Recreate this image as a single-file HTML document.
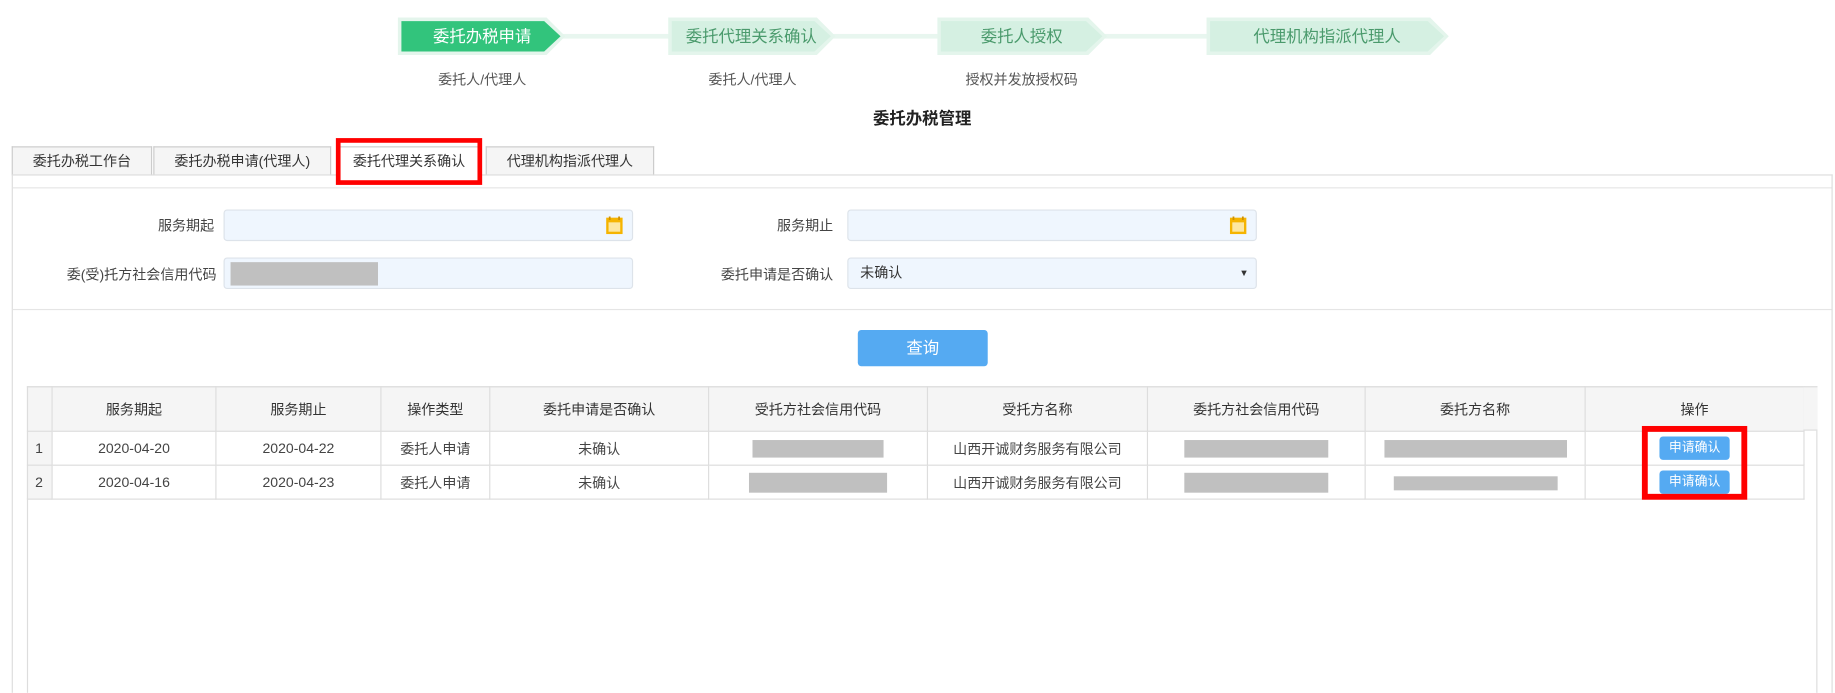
<!DOCTYPE html>
<html><head><meta charset="utf-8"><style>
*{box-sizing:border-box;margin:0;padding:0}
body{width:1835px;height:693px;overflow:hidden;background:#fff;font-family:"Liberation Sans","Noto Sans CJK SC",sans-serif;color:#333}
#w{position:absolute;left:0;top:0;width:1568px;height:592px;transform:scale(1.17028);transform-origin:0 0}
.a{position:absolute}
.lbl{font-size:12px;color:#555;text-align:center}
.tab{position:absolute;top:125px;height:25px;border:1px solid #ccc;border-bottom:none;background:#f5f5f5;font-size:12px;color:#333;text-align:center;line-height:24px}
.inp{position:absolute;height:27px;background:#eff6fe;border:1px solid #dde3ea;border-radius:3px;font-size:12px;line-height:25px;padding-left:10px}
.fl{position:absolute;font-size:12px;color:#444;text-align:right;width:180px}
table{border-collapse:collapse;font-size:12px;color:#444;table-layout:fixed}
td,th{border:1px solid #ddd;text-align:center;height:29px;font-weight:normal}
th{background:#f5f5f5;height:38px;color:#333}
.g{display:inline-block;background:#c0c0c0;height:15px;vertical-align:middle}
.btn{display:inline-block;background:#55aaf2;color:#fff;font-size:11px;width:60px;height:20px;line-height:20px;border-radius:3px}
</style></head><body><div id="w">
<svg class="a" style="left:0;top:0" width="1568" height="60">
<rect x="480" y="29" width="95" height="4" fill="#e8f6ef"/>
<rect x="712" y="29" width="92" height="4" fill="#e8f6ef"/>
<rect x="944" y="29" width="90" height="4" fill="#e8f6ef"/>
<polygon points="340,15 467,15 483,31 467,47 340,47" fill="#e4f5ec"/>
<polygon points="343,18 465,18 479,31 465,44 343,44" fill="#32c47c"/>
<polygon points="571,15 698,15 714,31 698,47 571,47" fill="#e4f5ec"/>
<polygon points="574,18 696,18 710,31 696,44 574,44" fill="#d5f0e2"/>
<polygon points="801,15 930,15 946,31 930,47 801,47" fill="#e4f5ec"/>
<polygon points="804,18 928,18 942,31 928,44 804,44" fill="#d5f0e2"/>
<polygon points="1031,15 1222,15 1238,31 1222,47 1031,47" fill="#e4f5ec"/>
<polygon points="1034,18 1220,18 1234,31 1220,44 1034,44" fill="#d5f0e2"/>
<g font-family="Liberation Sans,Noto Sans CJK SC,sans-serif" font-size="14" text-anchor="middle">
<text x="412" y="36" fill="#fff">委托办税申请</text>
<text x="642" y="36" fill="#4a9a6c">委托代理关系确认</text>
<text x="873" y="36" fill="#4a9a6c">委托人授权</text>
<text x="1134" y="36" fill="#4a9a6c">代理机构指派代理人</text>
</g></svg>
<div class="a lbl" style="left:352px;top:59px;width:120px">委托人/代理人</div>
<div class="a lbl" style="left:583px;top:59px;width:120px">委托人/代理人</div>
<div class="a lbl" style="left:803px;top:59px;width:140px">授权并发放授权码</div>
<div class="a" style="left:688px;top:91px;width:200px;text-align:center;font-size:14px;font-weight:bold;color:#222">委托办税管理</div>
<div class="tab" style="left:10px;width:120px">委托办税工作台</div>
<div class="tab" style="left:131px;width:152px">委托办税申请(代理人)</div>
<div class="tab" style="left:415px;width:144px">代理机构指派代理人</div>
<div class="a" style="left:10px;top:149px;width:1556px;height:443px;border:1px solid #ddd;border-bottom:none"></div>
<div class="a" style="left:11px;top:160px;width:1554px;border-top:1px solid #e5e5e5"></div>
<div class="tab" style="left:288px;width:123px;background:#fff;height:26px">委托代理关系确认</div>
<div class="a" style="left:287px;top:118px;width:125px;height:40px;border:4px solid #f00"></div>
<div class="fl" style="left:3px;top:184px">服务期起</div>
<div class="inp" style="left:191px;top:179px;width:350px"></div>
<div class="fl" style="left:532px;top:184px">服务期止</div>
<div class="inp" style="left:724px;top:179px;width:350px"></div>
<svg class="a" style="left:516px;top:183px" width="20" height="20"><rect x="2" y="3" width="14" height="14" fill="#f5b400"/><rect x="4" y="7" width="10" height="8" fill="#fde7a0"/><path d="M5 2v3M13 2v3" stroke="#d09000" stroke-width="1.5"/></svg>
<svg class="a" style="left:1049px;top:183px" width="20" height="20"><rect x="2" y="3" width="14" height="14" fill="#f5b400"/><rect x="4" y="7" width="10" height="8" fill="#fde7a0"/><path d="M5 2v3M13 2v3" stroke="#d09000" stroke-width="1.5"/></svg>
<div class="fl" style="left:5px;top:226px">委(受)托方社会信用代码</div>
<div class="inp" style="left:191px;top:220px;width:350px"><span class="g" style="position:absolute;left:5px;top:3px;width:126px;height:20px"></span></div>
<div class="fl" style="left:532px;top:226px">委托申请是否确认</div>
<div class="inp" style="left:724px;top:220px;width:350px">未确认<span style="position:absolute;right:6px;font-size:8px">▼</span></div>
<div class="a" style="left:11px;top:264px;width:1554px;border-top:1px solid #e5e5e5"></div>
<div class="a" style="left:733px;top:282px;width:111px;height:31px;background:#55aaf2;border-radius:3px;color:#fff;font-size:14px;text-align:center;line-height:31px">查询</div>
<div class="a" style="left:23px;top:330px;width:1530px;height:262px;border:1px solid #ddd;border-bottom:none"></div>
<table class="a" style="left:23px;top:330px;width:1518px">
<colgroup><col style="width:21px"><col style="width:140px"><col style="width:141px"><col style="width:93px"><col style="width:187px"><col style="width:187px"><col style="width:188px"><col style="width:186px"><col style="width:188px"><col style="width:187px"></colgroup>
<tr><th></th><th>服务期起</th><th>服务期止</th><th>操作类型</th><th>委托申请是否确认</th><th>受托方社会信用代码</th><th>受托方名称</th><th>委托方社会信用代码</th><th>委托方名称</th><th>操作</th></tr>
<tr><td style="background:#f5f5f5;text-align:left;padding-left:6px">1</td><td>2020-04-20</td><td>2020-04-22</td><td>委托人申请</td><td>未确认</td><td><span class="g" style="width:112px"></span></td><td>山西开诚财务服务有限公司</td><td><span class="g" style="width:123px"></span></td><td><span class="g" style="width:156px"></span></td><td><span class="btn">申请确认</span></td></tr>
<tr><td style="background:#f5f5f5;text-align:left;padding-left:6px">2</td><td>2020-04-16</td><td>2020-04-23</td><td>委托人申请</td><td>未确认</td><td><span class="g" style="width:118px;height:17px"></span></td><td>山西开诚财务服务有限公司</td><td><span class="g" style="width:123px;height:17px"></span></td><td><span class="g" style="width:140px;height:12px"></span></td><td><span class="btn">申请确认</span></td></tr>
</table>
<div class="a" style="left:1541px;top:330px;width:12px;height:38px;background:#f5f5f5;border-bottom:1px solid #ddd;border-top:1px solid #ddd"></div>
<div class="a" style="left:1403px;top:364px;width:90px;height:63px;border:5px solid #f00"></div>
</div></body></html>
